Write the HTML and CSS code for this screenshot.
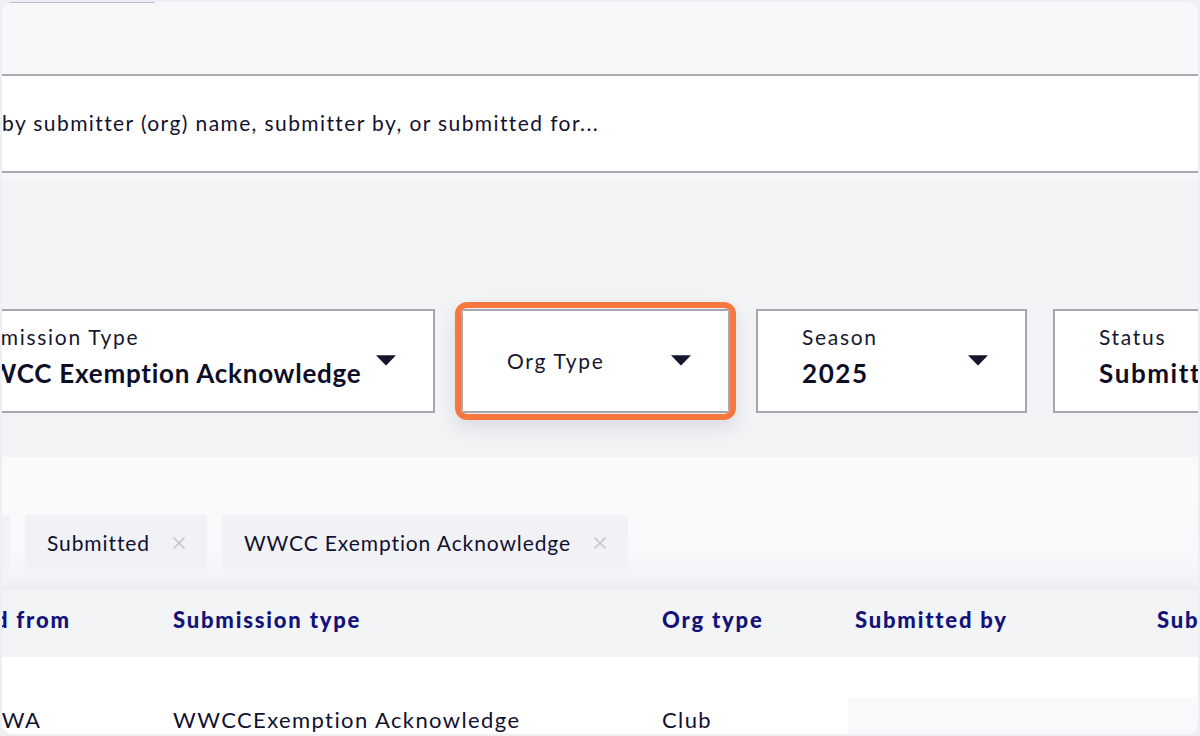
FILE: index.html
```html
<!DOCTYPE html>
<html lang="en">
<head>
<meta charset="utf-8">
<title>Submissions</title>
<link rel="stylesheet" href="styles.css">
</head>
<body>
<div class="frame">
  <div class="topbar"><div class="topline"></div></div>
  <div class="search">
    <span class="search-text">by submitter (org) name, submitter by, or submitted for...</span>
  </div>
  <div class="filters-area">
    <div class="strip"></div>
    <div class="filters">
      <div class="select wide">
        <div class="select-text">
          <div class="label">Submission Type</div>
          <div class="value tight">WWCC Exemption Acknowledge</div>
        </div>
        <svg class="caret" width="22" height="12" viewBox="0 0 22 12"><path d="M1 1.2 L21 1.2 L11.6 11 Q11 11.6 10.4 11 Z" fill="#15152e"/></svg>
      </div>
      <div class="focus-ring">
        <div class="select org">
          <div class="select-text single">
            <div class="label">Org Type</div>
          </div>
          <svg class="caret" width="22" height="12" viewBox="0 0 22 12"><path d="M1 1.2 L21 1.2 L11.6 11 Q11 11.6 10.4 11 Z" fill="#15152e"/></svg>
        </div>
      </div>
      <div class="select">
        <div class="select-text">
          <div class="label">Season</div>
          <div class="value">2025</div>
        </div>
        <svg class="caret" width="22" height="12" viewBox="0 0 22 12"><path d="M1 1.2 L21 1.2 L11.6 11 Q11 11.6 10.4 11 Z" fill="#15152e"/></svg>
      </div>
      <div class="select">
        <div class="select-text">
          <div class="label">Status</div>
          <div class="value">Submitted</div>
        </div>
        <svg class="caret" width="22" height="12" viewBox="0 0 22 12"><path d="M1 1.2 L21 1.2 L11.6 11 Q11 11.6 10.4 11 Z" fill="#15152e"/></svg>
      </div>
    </div>
  </div>
  <div class="chips-panel">
    <div class="chips">
      <div class="chip first"><span>2025</span></div>
      <div class="chip"><span>Submitted</span><svg class="x" width="14" height="14" viewBox="0 0 14 14"><path d="M1.5 1.5 L12.5 12.5 M12.5 1.5 L1.5 12.5" stroke="#c3c5cb" stroke-width="1.6" fill="none"/></svg></div>
      <div class="chip"><span>WWCC Exemption Acknowledge</span><svg class="x" width="14" height="14" viewBox="0 0 14 14"><path d="M1.5 1.5 L12.5 12.5 M12.5 1.5 L1.5 12.5" stroke="#c3c5cb" stroke-width="1.6" fill="none"/></svg></div>
    </div>
  </div>
  <div class="table">
    <div class="thead">
      <div class="th">Submitted from</div>
      <div class="th">Submission type</div>
      <div class="th">Org type</div>
      <div class="th">Submitted by</div>
      <div class="th">Submitted for</div>
    </div>
    <div class="trow">
      <div class="td">Basketball WA</div>
      <div class="td">WWCCExemption Acknowledge</div>
      <div class="td">Club</div>
      <div class="skeleton"></div>
    </div>
  </div>
</div>
</body>
</html>
```
FILE: styles.css
```css
html, body {
  margin: 0;
  padding: 0;
}
body {
  background: #eeeff2;
  font-family: Lato, "Open Sans", sans-serif;
  color: #111133;
  width: 1200px;
  height: 736px;
  overflow: hidden;
}
.frame {
  margin: 2px;
  height: 732px;
  border-radius: 10px;
  overflow: hidden;
  background: #f2f3f5;
}
.topbar {
  height: 72px;
  background: #f8f8fa;
}
.topline {
  width: 150px;
  height: 1px;
  margin-left: 3px;
  background: #bdb9d8;
}
.search {
  height: 95px;
  background: #ffffff;
  border-top: 2px solid #a9aab2;
  border-bottom: 2px solid #a9aab2;
  display: flex;
  align-items: center;
  font-size: 21px;
  letter-spacing: 1.4px;
  color: #12122e;
  white-space: nowrap;
}
.search-text {
  padding-bottom: 2px;
}
.filters-area {
  height: 284px;
  background: #f2f3f5;
}
.strip {
  height: 7px;
  background: #f6f7f9;
}
.filters {
  display: flex;
  gap: 26px;
  margin-top: 129px;
  margin-left: -87px;
}
.select {
  flex: none;
  box-sizing: border-box;
  width: 271px;
  height: 104px;
  background: #ffffff;
  border: 2px solid #a6a7ae;
  display: flex;
  align-items: center;
  padding-left: 44px;
  padding-right: 36px;
}
.select.wide {
  width: 520px;
}
.focus-ring {
  flex: none;
  margin: -7px -6px;
  border: 6px solid #f7773f;
  border-radius: 12px;
  overflow: hidden;
  box-shadow: 0 8px 18px rgba(30, 30, 70, 0.10);
  display: flex;
}
.select.org {
  width: 269px;
  margin: 1px 0;
}
.select-text {
  flex: 1;
  min-width: 0;
  white-space: nowrap;
  display: flex;
  flex-direction: column;
  gap: 7px;
  padding-bottom: 10px;
}
.select-text.single {
  padding-bottom: 0;
}
.label {
  font-size: 21px;
  line-height: 26px;
  letter-spacing: 1.7px;
  color: #17172f;
}
.value {
  font-size: 26px;
  line-height: 32px;
  font-weight: 700;
  letter-spacing: 1.6px;
  color: #0d0d28;
}
.value.tight {
  letter-spacing: 0.75px;
}
.caret {
  flex: none;
  margin-top: -2px;
}
.chips-panel {
  height: 133px;
  background: linear-gradient(#fafafb 0%, #f9f9fb 70%, #f3f4f8 90%, #eceef6 100%);
}
.chips {
  display: flex;
  gap: 15px;
  padding-top: 58px;
  margin-left: -92px;
}
.chip {
  flex: none;
  height: 55px;
  box-sizing: border-box;
  background: #f1f2f5;
  display: flex;
  align-items: center;
  padding: 0 21px 0 22px;
  gap: 22px;
  font-size: 21px;
  letter-spacing: 0.9px;
  color: #111130;
}
.chip.first {
  width: 100px;
}
.chip .x {
  flex: none;
}
.table {
  margin-left: -120px;
}
.thead, .trow {
  display: grid;
  grid-template-columns: 291px 489px 193px 302px 300px;
}
.thead {
  height: 67px;
  box-sizing: border-box;
  padding-bottom: 8px;
  background: #f3f4f6;
  align-items: center;
}
.th {
  font-size: 22px;
  font-weight: 900;
  letter-spacing: 1.8px;
  color: #12127a;
  white-space: nowrap;
}
.th:first-child {
  padding-left: 9px;
}
.td:first-child {
  padding-left: 1px;
}
.trow {
  height: 100px;
  background: #ffffff;
  align-items: start;
}
.td {
  padding-top: 50px;
  font-size: 22px;
  line-height: 26px;
  letter-spacing: 1.4px;
  color: #111130;
  white-space: nowrap;
}
.skeleton {
  grid-column: 4 / 6;
  margin-top: 40px;
  margin-left: -7px;
  height: 60px;
  background: #f8f9fa;
}
```
